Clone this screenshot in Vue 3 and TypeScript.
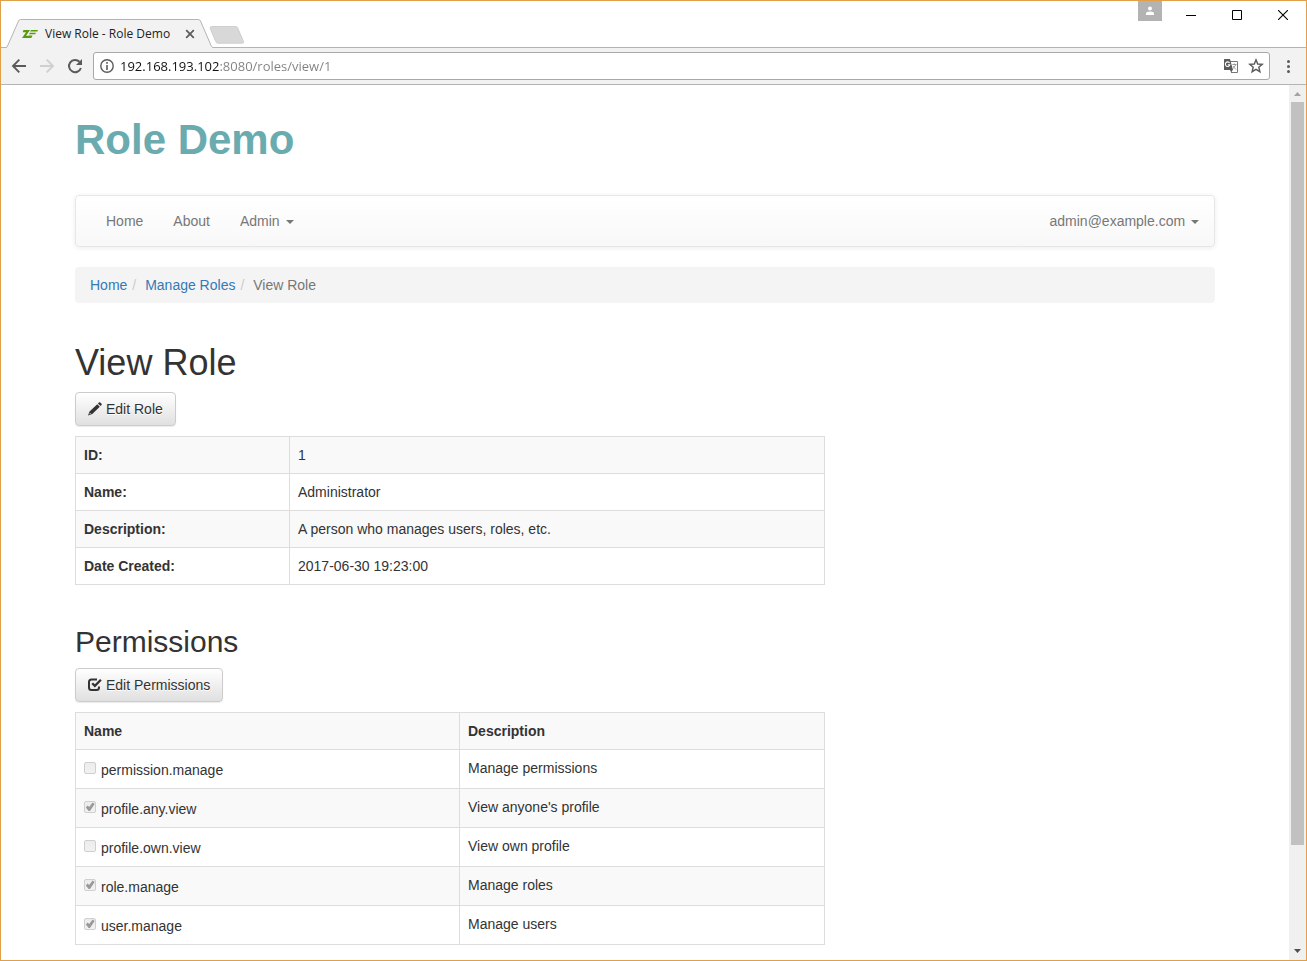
<script setup lang="ts">
import { ref } from 'vue'

interface Detail {
  label: string
  value: string
}

interface Permission {
  name: string
  description: string
  granted: boolean
}

const address = ref('192.168.193.102:8080/roles/view/1')

const details: Detail[] = [
  { label: 'ID:', value: '1' },
  { label: 'Name:', value: 'Administrator' },
  { label: 'Description:', value: 'A person who manages users, roles, etc.' },
  { label: 'Date Created:', value: '2017-06-30 19:23:00' },
]

const permissions: Permission[] = [
  { name: 'permission.manage', description: 'Manage permissions', granted: false },
  { name: 'profile.any.view', description: "View anyone's profile", granted: true },
  { name: 'profile.own.view', description: 'View own profile', granted: false },
  { name: 'role.manage', description: 'Manage roles', granted: true },
  { name: 'user.manage', description: 'Manage users', granted: true },
]
</script>

<template>
  <div class="window">
    <header class="tab-strip">
      <div class="tab">
        <svg class="tab-shape" viewBox="0 0 208 29" width="208" height="29" aria-hidden="true">
          <path d="M0 29V28.500Q1 28.500 1.500 27L12.500 2Q13 .5 14.500 .5H192Q194 .5 194.500 2L205.500 27.500Q206 28.500 207 28.500H208V29Z" fill="#f2f2f2" />
          <path d="M0 28.500Q1 28.500 1.500 27L12.500 2Q13 .5 14.500 .5H192Q194 .5 194.500 2L205.500 27.500Q206 28.500 208 28.500" fill="none" stroke="#b4b4b4" />
        </svg>
        <svg class="favicon" viewBox="0 0 16 10" width="16" height="10" aria-hidden="true">
          <path d="M1.500 1H8L4 6.800H7L6 9H0L4 3.200H.7ZM9 1H16L15.300 2.600H8ZM7.800 3.700H14L13.200 5.300H7ZM6.800 6.400H10.500L9.300 9H5.900Z" fill="#599c0b" />
        </svg>
        <span class="tab-title">View Role - Role Demo</span>
        <button class="tab-close" aria-label="Close tab">
          <svg viewBox="0 0 10 10" width="10" height="10"><path d="M1.200 1.200 8.800 8.800M8.800 1.200 1.200 8.800" stroke="#5a5a5a" stroke-width="1.700" /></svg>
        </button>
      </div>
      <button class="new-tab" aria-label="New tab">
        <svg viewBox="0 0 36 18" width="36" height="18">
          <path d="M2.500 .5H26.500Q28 .5 28.700 2L34.500 15.500Q35 17.200 33.500 17.200H9Q7.500 17.200 6.800 15.700L1.200 2.200Q.8 .5 2.500 .5Z" fill="#d8d8d8" stroke="#cecece" />
        </svg>
      </button>
      <div class="window-controls">
        <button class="profile" aria-label="Profile">
          <svg viewBox="0 0 10 10" width="10" height="10"><circle cx="5" cy="2.500" r="2" fill="#fff" /><path d="M1 9V7.500Q1 5.500 5 5.500T9 7.500V9Z" fill="#fff" /></svg>
        </button>
        <button class="control" aria-label="Minimize">
          <svg viewBox="0 0 10 10" width="10" height="10"><path d="M0 5.500H10" stroke="#000" /></svg>
        </button>
        <button class="control" aria-label="Maximize">
          <svg viewBox="0 0 10 10" width="10" height="10"><path d="M.5 .5H9.500V9.500H.5Z" stroke="#000" fill="none" /></svg>
        </button>
        <button class="control" aria-label="Close">
          <svg viewBox="0 0 10 10" width="10" height="10"><path d="M0 0 10 10M10 0 0 10" stroke="#000" stroke-width="1.100" /></svg>
        </button>
      </div>
    </header>

    <div class="toolbar">
      <div class="history">
        <button aria-label="Back">
          <svg viewBox="0 0 16 16" width="16" height="16"><path d="M15 8H2.500M8.300 1.700 2 8l6.300 6.300" fill="none" stroke="#5a5a5a" stroke-width="1.900" /></svg>
        </button>
        <button aria-label="Forward">
          <svg viewBox="0 0 16 16" width="16" height="16"><path d="M1 8H13.500M7.700 1.700 14 8l-6.300 6.300" fill="none" stroke="#d0d0d0" stroke-width="1.900" /></svg>
        </button>
        <button aria-label="Reload">
          <svg viewBox="0 0 16 16" width="16" height="16"><path d="M13.900 10A6.100 6.100 0 1 1 12.500 3.800" fill="none" stroke="#5a5a5a" stroke-width="2" /><path d="M15 1V7H9Z" fill="#5a5a5a" /></svg>
        </button>
      </div>
      <div class="address-bar">
        <svg viewBox="0 0 14 14" width="14" height="14" aria-hidden="true">
          <circle cx="7" cy="7" r="6.200" fill="none" stroke="#5a5a5a" stroke-width="1.400" />
          <path d="M7 3V4.700M7 6V11" stroke="#5a5a5a" stroke-width="1.600" />
        </svg>
        <input v-model="address" class="address" type="text" aria-label="Address" spellcheck="false" />
        <button aria-label="Translate this page">
          <svg viewBox="0 0 16 16" width="16" height="16">
            <path d="M7 3.500H14.500V14.500H8" fill="#fff" stroke="#777" />
            <path d="M1.500 1H7L10 12H1.500Q1 12 1 11.500V1.500Q1 1 1.500 1Z" fill="#5a5a5a" />
            <path d="M6.800 11.500H10L8.200 14.500Z" fill="#5a5a5a" />
            <path d="M6.600 4.900A2.300 2.300 0 1 0 6.900 6.700H4.800" fill="none" stroke="#fff" stroke-width="1.100" />
            <path d="M9.300 6.500H13.500M11.400 5.500V6.500M12.800 6.500Q12 9 9.800 10.500M10.200 8Q11.500 10 13 11.500" fill="none" stroke="#888" stroke-width=".8" />
          </svg>
        </button>
        <button aria-label="Bookmark this page">
          <svg viewBox="0 0 16 16" width="16" height="16"><path d="M8 1.800 9.700 6 14.200 6.300 10.800 9.200 11.900 13.700 8 11.300 4.100 13.700 5.200 9.200 1.800 6.300 6.300 6Z" fill="none" stroke="#5a5a5a" stroke-width="1.400" /></svg>
        </button>
      </div>
      <button class="menu" aria-label="Menu">
        <svg viewBox="0 0 16 16" width="16" height="16" fill="#5a5a5a"><circle cx="8.500" cy="3.500" r="1.500" /><circle cx="8.500" cy="8.500" r="1.500" /><circle cx="8.500" cy="13.500" r="1.500" /></svg>
      </button>
    </div>

    <div class="viewport">
      <main class="page">
        <div class="container">
          <div class="brand">Role Demo</div>

          <nav class="navbar" aria-label="Main">
            <a href="#home">Home</a>
            <a href="#about">About</a>
            <button>Admin <span class="caret"></span></button>
            <button class="account">admin@example.com <span class="caret"></span></button>
          </nav>

          <ol class="breadcrumb" aria-label="Breadcrumb">
            <li><a href="#home">Home</a></li>
            <li><a href="#roles">Manage Roles</a></li>
            <li class="active">View Role</li>
          </ol>

          <h1>View Role</h1>
          <a class="btn" href="#edit-role">
            <svg viewBox="0 0 14 14" width="14" height="14" aria-hidden="true">
              <path d="M10.900 .6Q11.600 0 12.300 .6L13.500 1.800Q14.100 2.500 13.500 3.100L12.500 4.100 9.900 1.600ZM9.300 2.200 11.800 4.700 4.300 12 0 13.500 1.500 9.500ZM2 10.700 1.300 12.300 2.900 11.700Z" fill="#333" fill-rule="evenodd" />
            </svg>
            Edit Role
          </a>
          <table class="details">
            <tbody>
              <tr v-for="item in details" :key="item.label">
                <th scope="row">{{ item.label }}</th>
                <td>{{ item.value }}</td>
              </tr>
            </tbody>
          </table>

          <h2>Permissions</h2>
          <a class="btn" href="#edit-permissions">
            <svg viewBox="0 0 14 14" width="14" height="14" aria-hidden="true">
              <path d="M9 1.500H3.500Q1 1.500 1 4V9.500Q1 12 3.500 12H8.500Q11 12 11 9.500V8.500" fill="none" stroke="#333" stroke-width="2" />
              <path d="M4.200 5.200 6.900 7.900 12.900 1.700" fill="none" stroke="#333" stroke-width="2.300" />
            </svg>
            Edit Permissions
          </a>
          <table class="permissions">
            <thead>
              <tr>
                <th scope="col">Name</th>
                <th scope="col">Description</th>
              </tr>
            </thead>
            <tbody>
              <tr v-for="item in permissions" :key="item.name">
                <td>
                  <label class="permission">
                    <input type="checkbox" :checked="item.granted" disabled />
                    <span>{{ item.name }}</span>
                  </label>
                </td>
                <td>{{ item.description }}</td>
              </tr>
            </tbody>
          </table>
        </div>
      </main>
      <div class="scrollbar" aria-hidden="true">
        <svg viewBox="0 0 17 17" width="17" height="17"><path d="M5 11 8.500 7 12 11Z" fill="#a3a3a3" /></svg>
        <div class="track"><div class="thumb"></div></div>
        <svg viewBox="0 0 17 17" width="17" height="17"><path d="M5 6 8.500 10 12 6Z" fill="#505050" /></svg>
      </div>
    </div>
  </div>
</template>

<style>
body {
  margin: 0;
  background: #fff;
}
</style>

<style scoped>
* {
  box-sizing: border-box;
}

.window {
  display: flex;
  flex-direction: column;
  height: 100vh;
  overflow: hidden;
  border: 1px solid #e0a04a;
  background: #fff;
  color: #333;
  font: 14px/20px "Liberation Sans", Arial, sans-serif;
}

button {
  padding: 0;
  border: 0;
  background: none;
  color: inherit;
  font: inherit;
}

svg {
  display: block;
  flex: none;
}

a {
  color: #337ab7;
  text-decoration: none;
}

/* Browser frame */
.tab-strip {
  display: flex;
  flex: none;
  align-items: flex-end;
  height: 47px;
  border-bottom: 1px solid #b4b4b4;
}

.tab {
  position: relative;
  display: flex;
  align-items: center;
  width: 208px;
  height: 29px;
  margin: 0 -5px -1px 5px;
  padding: 0 19px 0 16px;
}

.tab-shape {
  position: absolute;
  inset: 0;
}

.favicon,
.tab-title,
.tab-close {
  position: relative;
}

.tab-title {
  flex: 1;
  margin-left: 7px;
  color: #222;
  font: 12px/20px "Open Sans", "Noto Sans", sans-serif;
  white-space: nowrap;
}

.new-tab {
  margin-bottom: 3px;
}

.window-controls {
  display: flex;
  align-self: flex-start;
  margin-left: auto;
}

.profile {
  display: grid;
  place-items: center;
  width: 24px;
  height: 20px;
  margin-right: 6px;
  background: #b3b3b3;
}

.control {
  display: grid;
  place-items: center;
  width: 46px;
  height: 28px;
}

.toolbar {
  display: flex;
  flex: none;
  align-items: center;
  gap: 10px;
  height: 37px;
  padding: 0 10px;
  border-bottom: 1px solid #b4b4b4;
  background: #f2f2f2;
}

.history {
  display: flex;
  gap: 12px;
}

.address-bar {
  display: flex;
  flex: 1;
  align-items: center;
  gap: 9px;
  height: 28px;
  padding: 0 5px 0 6px;
  border: 1px solid #a8a8a8;
  border-radius: 3px;
  background: #fff;
}

.address {
  flex: 1;
  min-width: 0;
  height: 24px;
  margin-left: -3px;
  padding: 0;
  border: 0;
  outline: 0;
  background: linear-gradient(90deg, #111 99px, #808080 99px);
  background-clip: text;
  color: transparent;
  font: 13px/24px "Open Sans", "Noto Sans", sans-serif;
}

/* Page area */
.viewport {
  display: flex;
  flex: 1;
  min-height: 0;
}

.page {
  flex: 1;
  overflow: hidden;
}

.scrollbar {
  display: flex;
  flex-direction: column;
  width: 17px;
  background: #f0f0f0;
}

.track {
  flex: 1;
  padding: 0 2px;
}

.thumb {
  height: 88.4%;
  background: #c1c1c1;
}

.container {
  max-width: 1170px;
  margin: 0 auto;
  padding: 31px 15px 16px;
}

.brand {
  color: #6aabb0;
  font-size: 42px;
  font-weight: bold;
  line-height: 48px;
}

.navbar {
  display: flex;
  align-items: center;
  height: 52px;
  margin-top: 31px;
  padding: 0 15px;
  border: 1px solid #e7e7e7;
  border-radius: 4px;
  background: linear-gradient(#fff, #f8f8f8);
  box-shadow: 0 1px 5px rgba(0, 0, 0, 0.08);
}

.navbar a,
.navbar button {
  padding: 0 15px;
  color: #777;
}

.navbar .account {
  margin-left: auto;
  padding-right: 0;
}

.caret {
  display: inline-block;
  margin-left: 2px;
  border-top: 4px solid;
  border-right: 4px solid transparent;
  border-left: 4px solid transparent;
  vertical-align: middle;
}

.breadcrumb {
  display: flex;
  margin: 20px 0 39px;
  padding: 8px 15px;
  border-radius: 4px;
  background: #f4f4f4;
  list-style: none;
}

.breadcrumb li + li::before {
  padding: 0 5px;
  color: #ccc;
  content: "/\00a0";
}

.breadcrumb .active {
  color: #777;
}

h1,
h2 {
  font-weight: normal;
}

h1 {
  margin: 0 0 8px;
  font-size: 36px;
  line-height: 42px;
}

h2 {
  margin: 40px 0 10px;
  font-size: 30px;
  line-height: 33px;
}

.btn {
  display: flex;
  gap: 4px;
  align-items: center;
  width: max-content;
  margin-bottom: 10px;
  padding: 6px 12px;
  border: 1px solid #ccc;
  border-radius: 4px;
  background: linear-gradient(#fff, #e0e0e0);
  box-shadow: inset 0 1px 0 rgba(255, 255, 255, 0.15), 0 1px 1px rgba(0, 0, 0, 0.08);
  color: #333;
  text-shadow: 0 1px 0 #fff;
}

table {
  width: 750px;
  max-width: 100%;
  border-collapse: collapse;
  table-layout: fixed;
}

th,
td {
  padding: 8px;
  border: 1px solid #ddd;
  text-align: left;
  vertical-align: top;
}

.details th {
  width: 214px;
}

.permissions th:first-child {
  width: 384px;
}

.details tr:nth-child(odd),
.permissions thead tr,
.permissions tbody tr:nth-child(even) {
  background: #f9f9f9;
}

.permission {
  display: flex;
  gap: 5px;
  padding-top: 2px;
}

.permission input {
  display: grid;
  place-items: center;
  width: 12px;
  height: 12px;
  margin: 2px 0 0;
  appearance: none;
  border: 1px solid #cfcfcf;
  border-radius: 2px;
  background: linear-gradient(#ececec, #f1f1f1);
}

.permission input:checked::before {
  width: 10px;
  height: 10px;
  background: #999;
  clip-path: polygon(8% 55%, 26% 36%, 42% 50%, 76% 4%, 96% 20%, 50% 90%, 36% 90%);
  content: "";
}
</style>
